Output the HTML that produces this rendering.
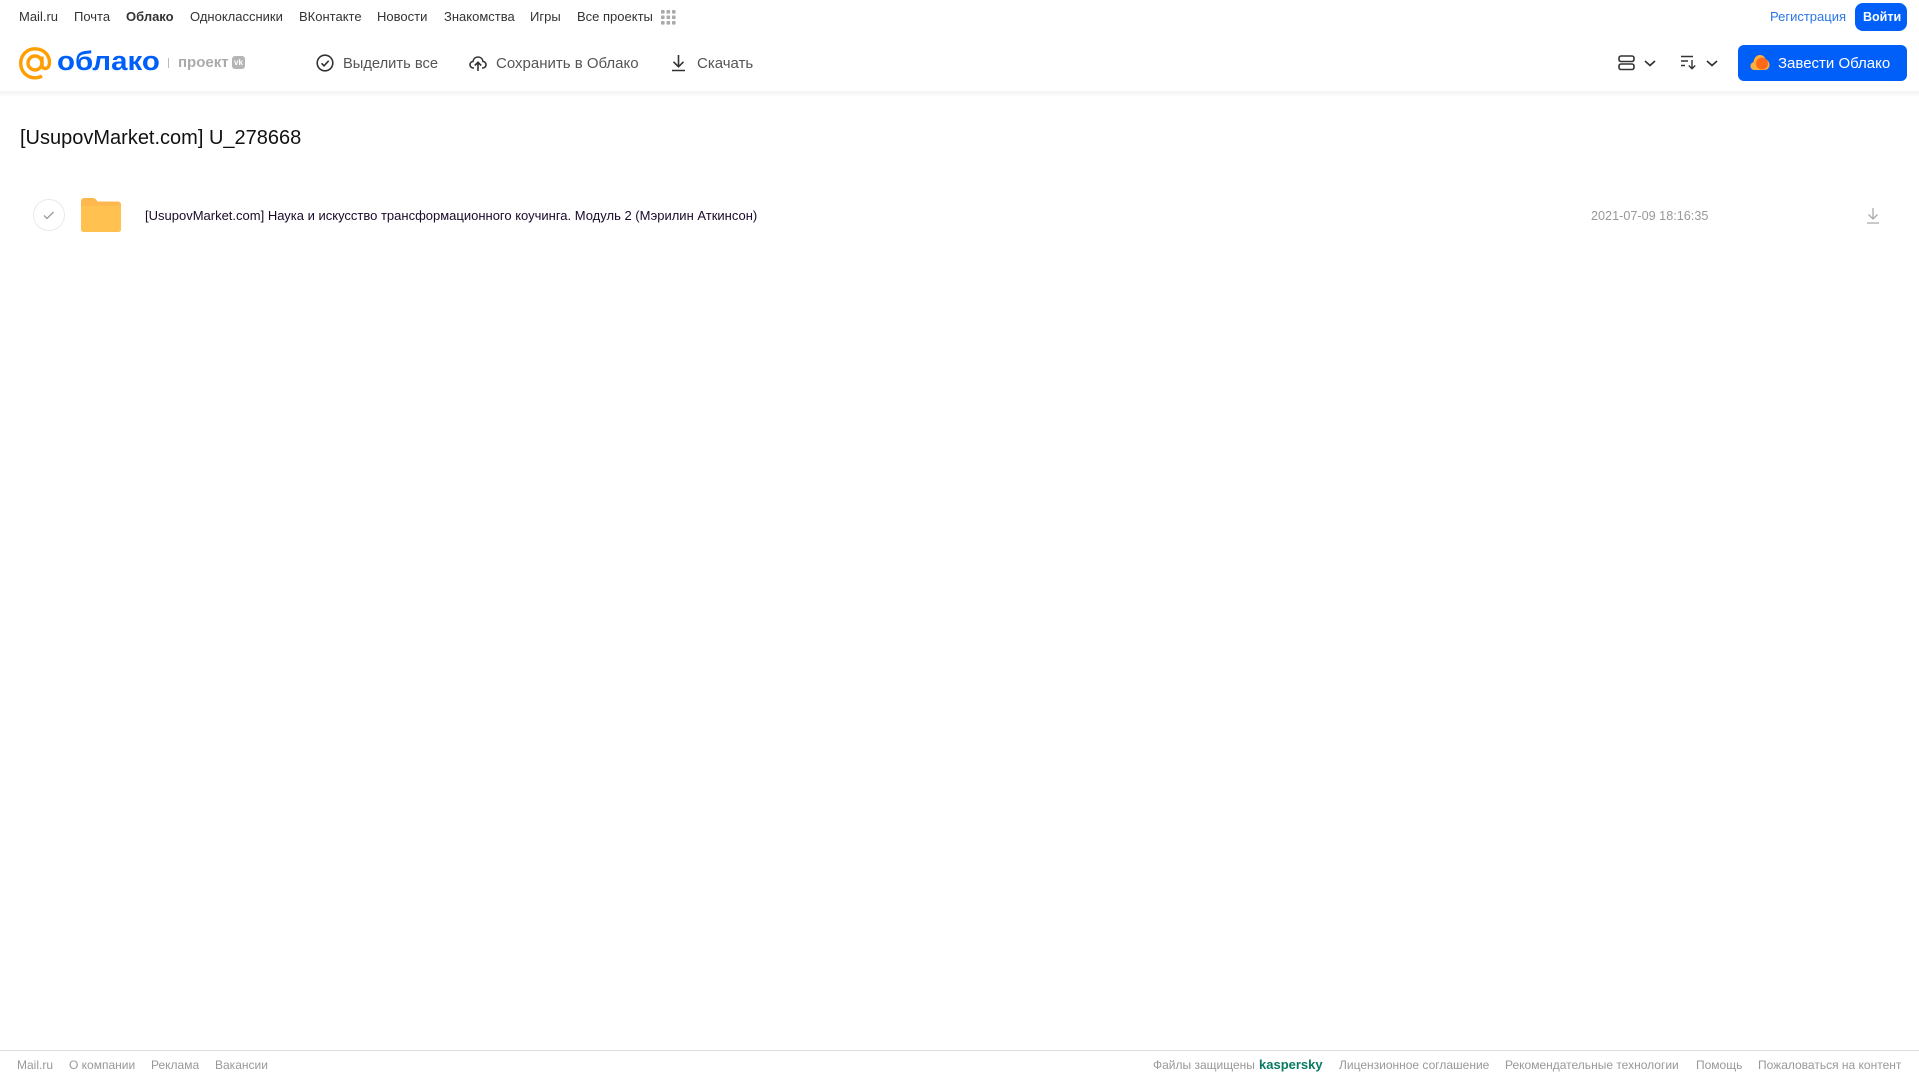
<!DOCTYPE html>
<html lang="ru"><head><meta charset="utf-8"><title>Облако</title>
<style>
html,body{margin:0;padding:0;background:#fff;width:1919px;height:1079px;overflow:hidden;font-family:"Liberation Sans",sans-serif}
.a{position:absolute;white-space:nowrap}
.n{font-size:13px;line-height:16px;top:9px;color:#333}
.t{font-size:15px;line-height:18px;top:54.500px;color:#555}
.f{font-size:12px;line-height:16px;top:1057px;color:#999}
svg{position:absolute;overflow:visible}
</style></head><body>
<div class="a" style="left:0;top:91px;width:1919px;height:6px;background:linear-gradient(#f3f3f3,#fff)"></div>

<span class="a n" style="left:19px">Mail.ru</span>
<span class="a n" style="left:74px">Почта</span>
<span class="a n" style="left:126px;font-weight:bold">Облако</span>
<span class="a n" style="left:190px">Одноклассники</span>
<span class="a n" style="left:299px">ВКонтакте</span>
<span class="a n" style="left:377px">Новости</span>
<span class="a n" style="left:444px">Знакомства</span>
<span class="a n" style="left:530px">Игры</span>
<span class="a n" style="left:577px">Все проекты</span>
<svg style="left:661px;top:10px" width="15" height="15" fill="#aaa"><rect x="0" y="0" width="3.600" height="3.600" rx=".8"/><rect x="5.500" y="0" width="3.600" height="3.600" rx=".8"/><rect x="11" y="0" width="3.600" height="3.600" rx=".8"/><rect x="0" y="5.500" width="3.600" height="3.600" rx=".8"/><rect x="5.500" y="5.500" width="3.600" height="3.600" rx=".8"/><rect x="11" y="5.500" width="3.600" height="3.600" rx=".8"/><rect x="0" y="11" width="3.600" height="3.600" rx=".8"/><rect x="5.500" y="11" width="3.600" height="3.600" rx=".8"/><rect x="11" y="11" width="3.600" height="3.600" rx=".8"/></svg>

<svg style="left:19px;top:47px" width="33" height="33" fill="none" stroke="#ff9e00" stroke-width="3.400"><circle cx="16" cy="16" r="7"/><path d="M23 9.500v8.500c0 5 7.500 5 7.500-2.500C30.500 7.500 24 1.800 16 1.800S1.700 8 1.700 16.300 8 30.800 16 30.800c2.800 0 5-.6 7-1.800"/></svg>
<span class="a" style="left:57px;top:41px;font-size:27px;line-height:40px;color:#005ff9;font-weight:bold;letter-spacing:0;transform:scaleX(1.090);transform-origin:0 50%">облако</span>
<div class="a" style="left:168px;top:58px;width:1px;height:10px;background:#bbb"></div>
<span class="a" style="left:178px;top:54px;font-size:15px;line-height:18px;color:#aaa;font-weight:bold">проект</span>
<div class="a" style="left:232px;top:56px;width:13px;height:13px;border-radius:3px;background:#b5b5b5"></div>
<span class="a" style="left:234px;top:58px;font-size:8px;line-height:9px;color:#fff;font-weight:bold">vk</span>

<svg style="left:316px;top:54px" width="18" height="18" fill="none" stroke="#333" stroke-width="1.600"><circle cx="9" cy="9" r="7.800"/><path d="M5.500 9.300l2.500 2.500 4.700-5"/></svg>
<span class="a t" style="left:343px;font-size:14.700px">Выделить все</span>
<svg style="left:469px;top:54px" width="18" height="18" fill="none" stroke="#333" stroke-width="1.600"><path d="M5 14H4.500C2.500 14 1 12.500 1 10.700 1 9 2.300 7.600 4 7.400 4.500 4.600 6.600 3 9 3s4.500 1.600 5 4.400c1.700.2 3 1.600 3 3.300 0 1.800-1.500 3.300-3.500 3.300H13M9 17V8.500M5.800 11.500L9 8.300l3.200 3.200"/></svg>
<span class="a t" style="left:496px">Сохранить в Облако</span>
<svg style="left:671px;top:54px" width="15" height="18" fill="none" stroke="#333" stroke-width="1.600"><path d="M7.500 1v11.500M2.500 7.800l5 5 5-5M1 16.500h13"/></svg>
<span class="a t" style="left:697px">Скачать</span>

<svg style="left:1618px;top:55px" width="17" height="16" fill="none" stroke="#333" stroke-width="1.600"><rect x="1" y="1" width="15" height="5.500" rx="2"/><rect x="1" y="9" width="15" height="5.500" rx="2"/></svg>
<svg style="left:1644px;top:60px" width="12" height="7" fill="none" stroke="#333" stroke-width="1.700"><path d="M1 1l5 4.500L11 1"/></svg>
<svg style="left:1681px;top:55px" width="16" height="15" fill="none" stroke="#333" stroke-width="1.400"><path d="M0 1.500h12M0 6h7M0 10.500h4M11 5v8.500M7.800 10.500l3.200 3.200 3.200-3.200"/></svg>
<svg style="left:1706px;top:60px" width="12" height="7" fill="none" stroke="#333" stroke-width="1.700"><path d="M1 1l5 4.500L11 1"/></svg>

<span class="a n" style="left:1770px;color:#2a76e8">Регистрация</span>
<div class="a" style="left:1855px;top:3px;width:52px;height:28px;background:#005ff9;border-radius:8px"></div>
<span class="a n" style="left:1863px;color:#fff;font-weight:bold;font-size:12.500px">Войти</span>
<div class="a" style="left:1738px;top:45px;width:169px;height:36px;background:#005ff9;border-radius:6px"></div>
<svg style="left:1750px;top:54px" width="20" height="17"><path d="M4.500 16C2 16 .5 14.300.5 12c0-2 1.300-3.500 3-3.900C4 4 6.500 1 10 1c3 0 5 2 5.500 4.500C18 6 19.500 8.500 19.500 11c0 3-2.200 5-5 5z" fill="#ffb03a"/><circle cx="12" cy="9.500" r="6" fill="#ff6a1a"/></svg>
<span class="a" style="left:1778px;top:54.500px;font-size:15px;line-height:18px;color:#fff">Завести Облако</span>

<span class="a" style="left:20px;top:125px;font-size:20px;line-height:26px;color:#111">[UsupovMarket.com] U_278668</span>

<div class="a" style="left:33px;top:199px;width:30px;height:30px;border:1px solid #eaeaea;border-radius:50%"></div>
<svg style="left:43px;top:211px" width="12" height="9" fill="none" stroke="#999" stroke-width="1.300"><path d="M1 4.500l3 3 6.500-6.500"/></svg>
<svg style="left:81px;top:198px" width="40" height="34"><path d="M0 3a3 3 0 0 1 3-3h9c2 0 3 1 4.500 3.500H37a3 3 0 0 1 3 3V31a3 3 0 0 1-3 3H3a3 3 0 0 1-3-3z" fill="#ffb84d"/><rect y="8" width="40" height="26" rx="2.500" fill="#ffc251"/></svg>
<span class="a" style="left:145px;top:208px;font-size:13px;line-height:16px;color:#1a0a2a">[UsupovMarket.com] Наука и искусство трансформационного коучинга. Модуль 2 (Мэрилин Аткинсон)</span>
<span class="a" style="left:1591px;top:208px;font-size:12.650px;line-height:16px;color:#999">2021-07-09 18:16:35</span>
<svg style="left:1866px;top:207px" width="14" height="17" fill="none" stroke="#aaa" stroke-width="1.300"><path d="M7 1v11M2.500 7.500L7 12l4.500-4.500M1 16h12"/></svg>

<div class="a" style="left:0;top:1050px;width:1919px;height:1px;background:#ddd"></div>
<span class="a f" style="left:17px">Mail.ru</span>
<span class="a f" style="left:69px">О компании</span>
<span class="a f" style="left:151px">Реклама</span>
<span class="a f" style="left:215px">Вакансии</span>
<span class="a f" style="left:1153px">Файлы защищены</span>
<span class="a f" style="left:1259px;color:#0a7a63;font-weight:bold;font-size:13px">kaspersky</span>
<span class="a f" style="left:1339px">Лицензионное соглашение</span>
<span class="a f" style="left:1505px">Рекомендательные технологии</span>
<span class="a f" style="left:1696px">Помощь</span>
<span class="a f" style="left:1758px">Пожаловаться на контент</span>
</body></html>
